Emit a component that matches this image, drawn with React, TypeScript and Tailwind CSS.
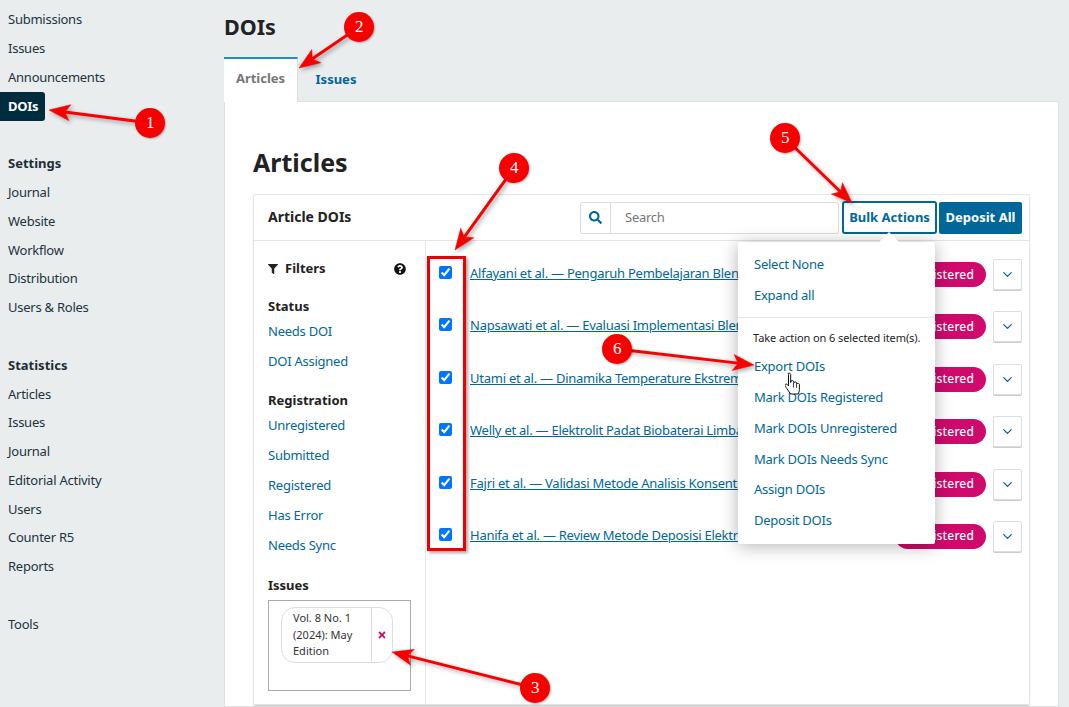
import { FaSearch, FaFilter, FaQuestionCircle, FaTimes } from 'react-icons/fa';
import { ChevronDown } from 'lucide-react';

const sidebar: { label?: string; kind?: 'head' | 'active' }[] = [
  { label: 'Submissions' },
  { label: 'Issues' },
  { label: 'Announcements' },
  { label: 'DOIs', kind: 'active' },
  {},
  { label: 'Settings', kind: 'head' },
  { label: 'Journal' },
  { label: 'Website' },
  { label: 'Workflow' },
  { label: 'Distribution' },
  { label: 'Users & Roles' },
  {},
  { label: 'Statistics', kind: 'head' },
  { label: 'Articles' },
  { label: 'Issues' },
  { label: 'Journal' },
  { label: 'Editorial Activity' },
  { label: 'Users' },
  { label: 'Counter R5' },
  { label: 'Reports' },
  {},
  { label: 'Tools' },
];

const rows = [
  'Alfayani et al. — Pengaruh Pembelajaran Blended Learning',
  'Napsawati et al. — Evaluasi Implementasi Blended Learning',
  'Utami et al. — Dinamika Temperature Ekstrem di Wilayah Pesisir',
  'Welly et al. — Elektrolit Padat Biobaterai Limbah Organik',
  'Fajri et al. — Validasi Metode Analisis Konsentrasi Logam',
  'Hanifa et al. — Review Metode Deposisi Elektroda Baterai',
];

const filters = [
  { head: 'Status', gap: 'mt-[17px]', links: ['Needs DOI', 'DOI Assigned'] },
  { head: 'Registration', gap: 'mt-[19px]', links: ['Unregistered', 'Submitted', 'Registered', 'Has Error', 'Needs Sync'] },
];

const actions = ['Export DOIs', 'Mark DOIs Registered', 'Mark DOIs Unregistered', 'Mark DOIs Needs Sync', 'Assign DOIs', 'Deposit DOIs'];

// circle centre -> arrow tip, as in the annotated screenshot
const marks = [
  { n: 1, cx: 150, cy: 123, tx: 49, ty: 110 },
  { n: 2, cx: 359, cy: 27, tx: 299, ty: 68 },
  { n: 3, cx: 535, cy: 688, tx: 392, ty: 652 },
  { n: 4, cx: 514, cy: 168, tx: 455, ty: 250 },
  { n: 5, cx: 785, cy: 138, tx: 852, ty: 203 },
  { n: 6, cx: 617, cy: 349, tx: 754, ty: 365 },
];

const Arrow = ({ cx, cy, tx, ty }: { cx: number; cy: number; tx: number; ty: number }) => {
  const len = Math.hypot(tx - cx, ty - cy);
  const ux = (tx - cx) / len;
  const uy = (ty - cy) / len;
  const px = -uy;
  const py = ux;
  const at = (back: number, side: number) => `${tx - ux * back + px * side},${ty - uy * back + py * side}`;
  return (
    <g fill="#f60000" stroke="#f60000">
      <line x1={cx} y1={cy} x2={tx - ux * 14} y2={ty - uy * 14} strokeWidth={3} />
      <polygon points={`${at(0, 0)} ${at(21, 8)} ${at(16, 0)} ${at(21, -8)}`} strokeWidth={0.5} />
    </g>
  );
};

const App = () => {
  return (
    <div className="relative flex h-[707px] w-[1069px] overflow-hidden bg-[#eaedee] font-['Noto_Sans',sans-serif] text-[13px] tracking-[-0.25px] text-[#222]">
      <nav className="w-[224px] shrink-0 pt-[5.5px]">
        {sidebar.map((item, i) => (
          <div key={i} className="flex h-[28.8px] items-center">
            {item.kind === 'active' ? (
              <span className="flex h-[29px] w-[45px] items-center rounded-r-[3px] bg-[#002c40] pl-2 font-bold text-white">{item.label}</span>
            ) : item.kind === 'head' ? (
              <span className="px-2 font-bold tracking-normal text-[#1f2d36]">{item.label}</span>
            ) : (
              <span className="px-2 text-[#1c3340]">{item.label}</span>
            )}
          </div>
        ))}
      </nav>

      <main className="flex w-[835px] shrink-0 flex-col">
        <h1 className="h-[57px] pt-[11px] text-[21.5px] leading-[32px] font-bold tracking-normal text-[#222]">DOIs</h1>
        <div className="flex h-[44px] tracking-normal">
          <div className="relative z-10 flex h-[45px] w-[74px] items-center justify-center border-t-2 border-r border-t-[#1e8fd0] border-r-[#ddd] bg-white pb-[3px] font-bold text-[#777]">
            Articles
          </div>
          <div className="flex w-[76px] items-center justify-center pt-[1px] font-bold text-[#006798]">Issues</div>
        </div>
        <section className="flex-1 border border-[#e0e0e0] bg-white pt-[40px] pr-[28px] pl-[28px]">
          <h2 className="h-[52px] text-[25px] leading-[40px] font-bold tracking-normal text-[#222]">Articles</h2>
          <div className="flex h-[511px] flex-col rounded-[2px] border border-[#e5e5e5] shadow-[0_1px_1px_rgba(0,0,0,0.2)]">
            <div className="flex h-[46px] shrink-0 items-center border-b border-[#e5e5e5] pr-[7px] pl-[14px]">
              <div className="flex-1 pb-[2px] text-[14px] font-bold tracking-normal text-[#222]">Article DOIs</div>
              <div className="flex h-[32px] w-[259px] rounded-[2px] border border-[#ddd]">
                <div className="flex w-[30px] items-center justify-center border-r border-[#ddd] text-[#006798]">
                  <FaSearch className="h-[13px] w-[13px]" />
                </div>
                <div className="flex items-center pl-[14px] text-[#777]">Search</div>
              </div>
              <button className="ml-[3px] h-[33px] w-[95px] rounded-[3px] border-2 border-[#006798] bg-white text-[13px] font-bold tracking-normal text-[#006798]">
                Bulk Actions
              </button>
              <button className="ml-[2px] h-[32px] w-[83px] rounded-[2px] bg-[#006798] text-[13px] font-bold tracking-normal text-white">Deposit All</button>
            </div>
            <div className="flex min-h-0 flex-1">
              <aside className="w-[172px] shrink-0 border-r border-[#e5e5e5] pt-[18px] pl-[14px]">
                <div className="flex h-[20px] w-[138px] items-center justify-between font-bold tracking-normal">
                  <span className="flex items-center gap-[7px]">
                    <FaFilter className="h-[10px] w-[10px] text-[#222]" />
                    Filters
                  </span>
                  <FaQuestionCircle className="h-[12px] w-[12px] text-[#111]" />
                </div>
                {filters.map((group) => (
                  <div key={group.head} className={group.gap}>
                    <div className="h-[20px] leading-[20px] font-bold tracking-normal">{group.head}</div>
                    <div className="mt-[5px] flex flex-col gap-[10px]">
                      {group.links.map((link) => (
                        <div key={link} className="h-[20px] leading-[20px] text-[#006798]">
                          {link}
                        </div>
                      ))}
                    </div>
                  </div>
                ))}
                <div className="mt-[20px] h-[20px] leading-[20px] font-bold tracking-normal">Issues</div>
                <div className="mt-[5px] h-[91px] w-[143px] border border-[#aaa] pt-[6px] pl-[12px]">
                  <div className="flex h-[56px] w-[112px] rounded-[14px] border border-[#ddd] text-[11px] leading-[16.5px] tracking-normal">
                    <div className="flex-1 pt-[2px] pl-[11px] text-[#333]">Vol. 8 No. 1 (2024): May Edition</div>
                    <div className="flex w-[21px] items-center justify-center border-l border-[#ddd] text-[#d00a6c]">
                      <FaTimes className="h-[10px] w-[10px]" />
                    </div>
                  </div>
                </div>
              </aside>
              <div className="min-w-0 flex-1 pt-[4px] pr-[7px] pl-[13px]">
                {rows.map((title) => (
                  <div key={title} className="flex h-[52.4px] items-start">
                    <input type="checkbox" defaultChecked className="mt-[21px] h-[13px] w-[13px] shrink-0" />
                    <a className="mt-[18px] ml-[18px] min-w-0 flex-1 truncate leading-[20px] text-[#006798] underline">{title}</a>
                    <span className="mt-[17px] flex h-[25px] w-[91px] shrink-0 items-center justify-end rounded-full bg-[#d00a6c] pr-[12px] text-[12px] font-medium tracking-[0.15px] text-white">
                      Registered
                    </span>
                    <button className="mt-[14px] ml-[7px] flex h-[31px] w-[29px] shrink-0 items-center justify-center rounded-[2px] border border-[#ddd] bg-white text-[#006798] shadow-[0_1px_0_#ccc]">
                      <ChevronDown className="h-[15px] w-[15px]" />
                    </button>
                  </div>
                ))}
              </div>
            </div>
          </div>
        </section>
      </main>

      {/* bulk actions popover */}
      <div className="absolute top-[242px] left-[738px] z-20 h-[302px] w-[197px] rounded-[2px] bg-white shadow-[0_2px_18px_rgba(0,0,0,0.3)]">
        <div className="absolute top-[-7px] left-[144px] h-[14px] w-[14px] rotate-45 bg-white" />
        <div className="relative flex h-[76px] flex-col border-b border-[#e5e5e5] pl-[16px] text-[#006798]">
          <div className="mt-[12px] h-[20px] leading-[20px]">Select None</div>
          <div className="mt-[11px] h-[20px] leading-[20px]">Expand all</div>
        </div>
        <div className="mt-[12px] h-[16px] pl-[15px] text-[11px] leading-[16px] tracking-[-0.08px] text-[#222]">Take action on 6 selected item(s).</div>
        <div className="mt-[5px] pl-[16px] text-[#006798]">
          {actions.map((a) => (
            <div key={a} className="flex h-[30.95px] items-center">
              {a}
            </div>
          ))}
        </div>
      </div>

      {/* annotations drawn over the screenshot */}
      <div className="absolute top-[256px] left-[427px] z-30 h-[295px] w-[39px] border-[3px] border-[#ee0000] shadow-[2px_2px_3px_rgba(0,0,0,0.35)]" />
      <svg width="1069" height="707" className="absolute top-0 left-0 z-30 drop-shadow-[2px_2px_2px_rgba(0,0,0,0.35)]">
        {marks.map((m) => (
          <Arrow key={m.n} {...m} />
        ))}
      </svg>
      {marks.map((m) => (
        <div
          key={m.n}
          className="absolute z-30 flex h-[30px] w-[30px] items-center justify-center rounded-full bg-[#f60000] font-['Liberation_Serif',serif] text-[17px] text-white shadow-[1px_1px_2px_rgba(0,0,0,0.3)]"
          style={{ left: m.cx - 15, top: m.cy - 15 }}
        >
          {m.n}
        </div>
      ))}
      {/* hand cursor */}
      <svg width="20" height="25" viewBox="0 0 20 25" className="absolute top-[372px] left-[785px] z-40">
        <path
          d="M3 1.5c1 -.8 2.5 -.3 2.7 1v8l.3 -1.5c1.3 -.8 2.5 -.4 2.8 .8l.2 1c.4 -1.2 2.2 -1.2 2.7 .2l.2 1c.5 -1 2.2 -.8 2.5 .5v5c0 2 -.6 3 -1.3 4.5h-7.5l-4.5 -6.5c-1 -1.6 -1.7 -2.5 -.6 -3.3 1 -.6 1.9 .3 3 1.6v-11.3z"
          fill="#fff"
          stroke="#111"
          strokeWidth="1"
          strokeLinejoin="round"
        />
        <path d="M8.5 10.5v5M11.5 11.5v4.5" stroke="#111" strokeWidth="0.8" fill="none" />
      </svg>
    </div>
  );
};

export default App;
